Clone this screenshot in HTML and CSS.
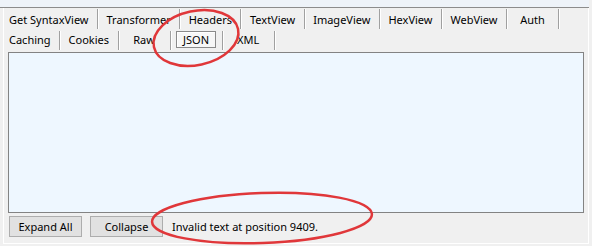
FILE: index.html
```html
<!DOCTYPE html>
<html>
<head>
  <title>Inspector - JSON</title>
  <link rel="stylesheet" href="styles.css">
</head>
<body>
  <div class="top-strip"></div>

  <div class="inspector">
    <div class="tab-row">
      <div class="tab">Get SyntaxView</div>
      <div class="tab">Transformer</div>
      <div class="tab">Headers</div>
      <div class="tab">TextView</div>
      <div class="tab">ImageView</div>
      <div class="tab">HexView</div>
      <div class="tab">WebView</div>
      <div class="tab">Auth</div>
    </div>
    <div class="tab-row second">
      <div class="tab">Caching</div>
      <div class="tab">Cookies</div>
      <div class="tab">Raw</div>
      <div class="tab selected"><span>JSON</span></div>
      <div class="tab">XML</div>
    </div>

    <div class="json-view"></div>

    <div class="status-bar">
      <button>Expand All</button>
      <button>Collapse</button>
      <span class="status-text">Invalid text at position 9409.</span>
    </div>
  </div>

  <!-- red annotation marks drawn over the screenshot -->
  <svg class="marks" width="592" height="246" viewBox="0 0 592 246">
    <ellipse cx="196" cy="38" rx="43" ry="27" transform="rotate(-12 196 38)" />
    <ellipse cx="262" cy="218" rx="110" ry="25" transform="rotate(-2 262 218)" />
  </svg>
</body>
</html>
```

FILE: styles.css
```css
body {
  margin: 0;
  width: 592px;
  height: 246px;
  background: #f0f0f0;
  font-family: "Noto Sans", "Open Sans", sans-serif;
  font-size: 11px;
  color: #000;
  overflow: hidden;
}

.top-strip {
  height: 7px;
  width: 589px;
  background: #eef3f9;
  border-bottom: 1px solid #8c8c8c;
}

.inspector {
  margin-left: 3px;
  width: 584px;
  height: 235px;
  border-left: 1px solid #fff;
  border-right: 1px solid #fff;
  border-bottom: 1px solid #fff;
  display: flex;
  flex-direction: column;
}

.tab-row {
  display: flex;
  height: 21px;
}

.tab-row.second {
  height: 22px;
  margin-bottom: 1px;
}

.tab {
  min-width: 52px;
  box-sizing: border-box;
  padding: 0 8.5px;
  display: flex;
  align-items: center;
  justify-content: center;
  margin: 1px 0 0;
  border-right: 1px solid #a0a0a0;
  box-shadow: 1px 0 0 #fff;
  white-space: nowrap;
}

.second .tab {
  margin: 2px 0 1px;
  padding-bottom: 3px;
}

.tab:first-child {
  padding-left: 5px;
}

.second .tab.selected {
  padding: 0 4px 2px;
}

.tab.selected span {
  border: 1px solid #8a8a8a;
  box-shadow: inset 1px 1px 0 #fff;
  background: #f7f7f7;
  padding: 1px 6px 0;
  line-height: 14px;
}

.json-view {
  margin: 0 4px;
  height: 159px;
  background: #eef7ff;
  border: 1px solid #838383;
}

.status-bar {
  display: flex;
  align-items: center;
  gap: 8px;
  padding: 3px 5px;
}

button {
  width: 73px;
  height: 21px;
  padding: 0;
  background: #e1e1e1;
  border: 1px solid #adadad;
  border-radius: 0;
  font-family: inherit;
  font-size: 11px;
  color: #000;
}

.status-text {
  margin-left: 1px;
}

.marks {
  position: absolute;
  left: 0;
  top: 0;
  pointer-events: none;
}

.marks ellipse {
  fill: none;
  stroke: #e0373a;
  stroke-width: 2.5;
}
```
